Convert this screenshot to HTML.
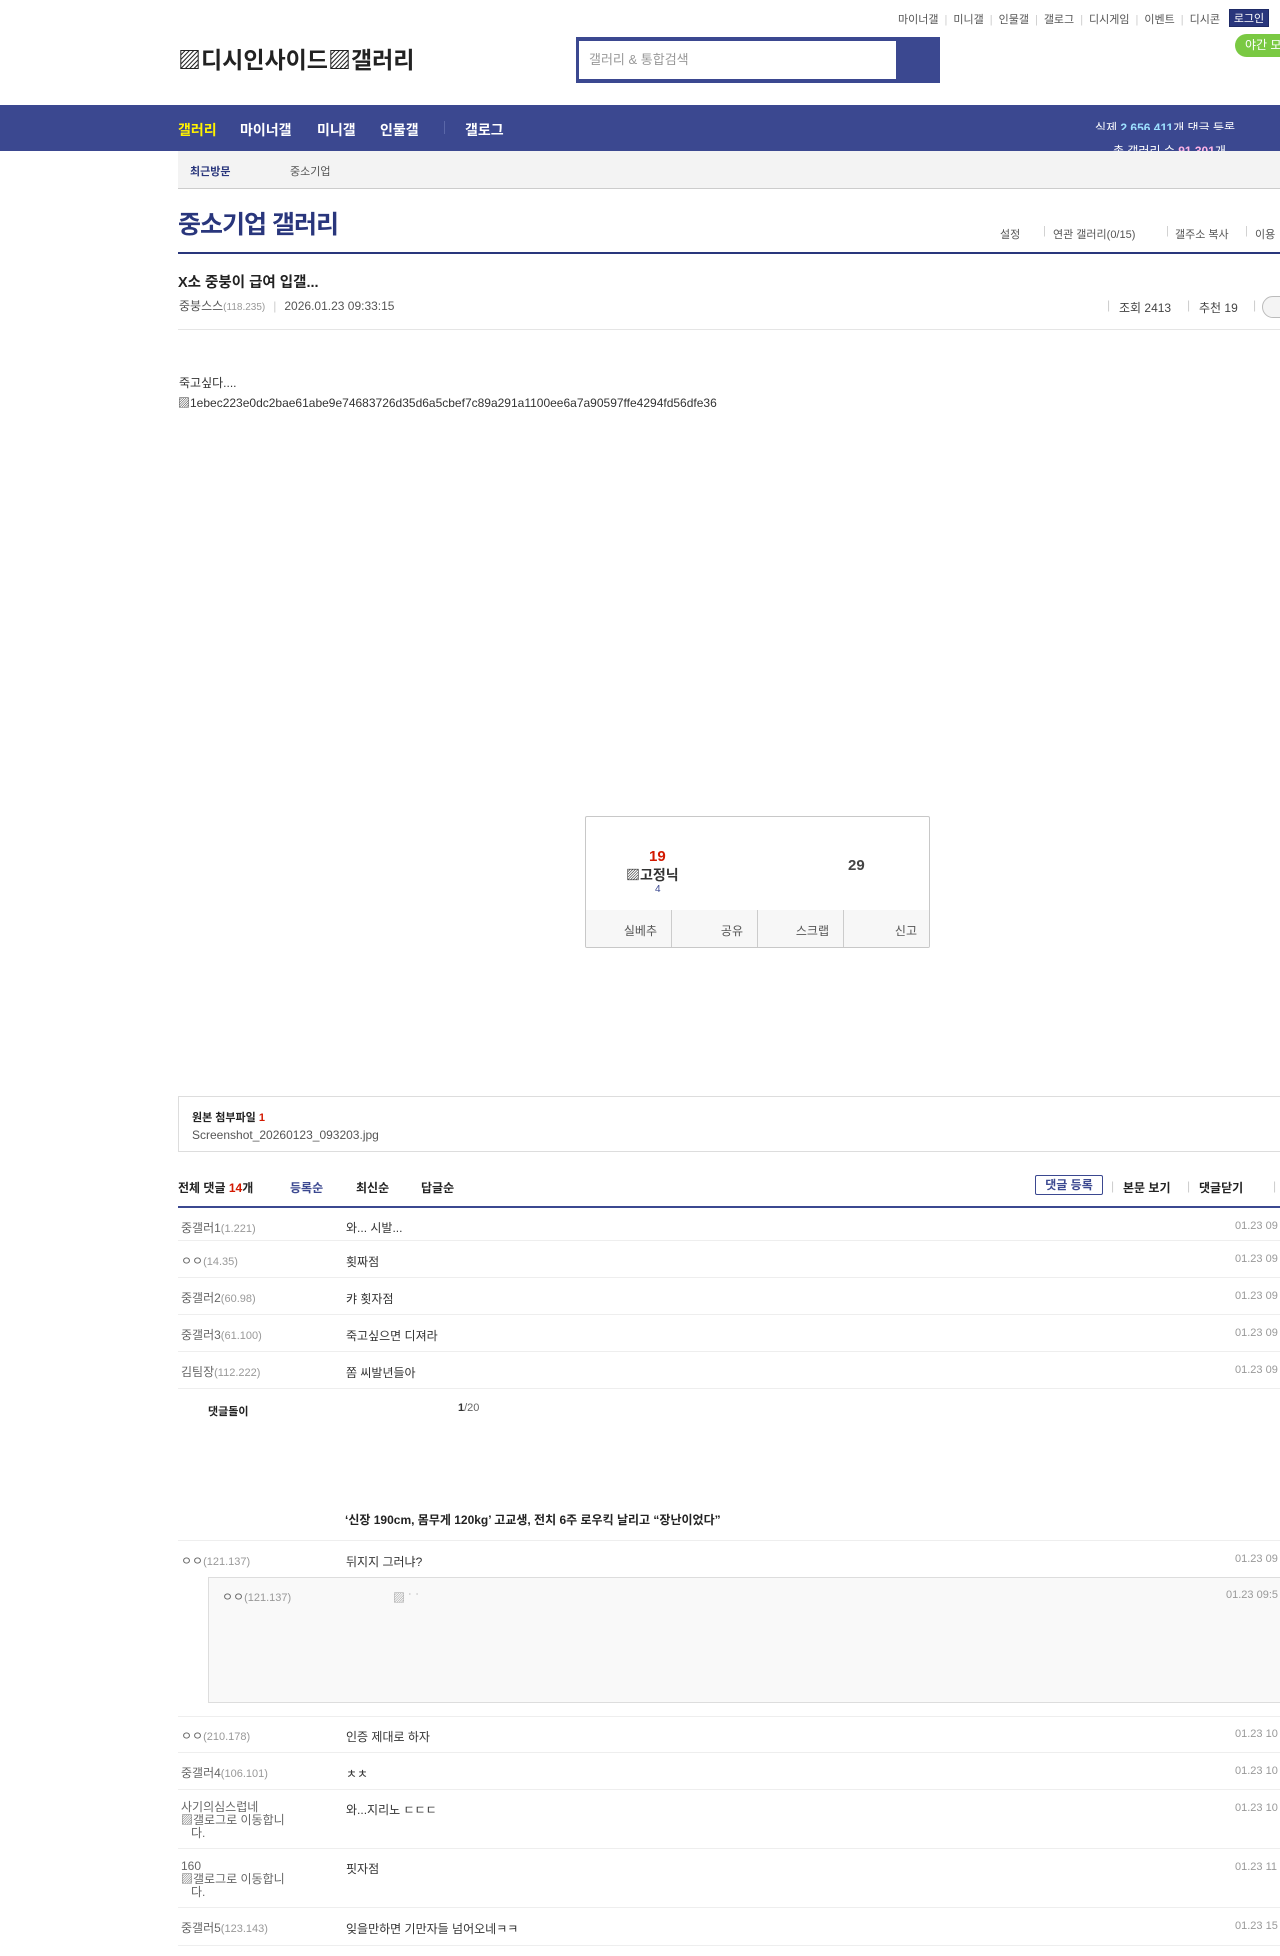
<!DOCTYPE html>
<html><head><meta charset="utf-8">
<style>
*{margin:0;padding:0;box-sizing:border-box}
body{width:1280px;height:1956px;overflow:hidden;background:#fff;font-family:"Liberation Sans","Noto Sans CJK KR",sans-serif;font-size:12px;color:#333;position:relative}
.a{position:absolute;white-space:nowrap}
.top{top:11px;right:60px;font-size:11px;color:#555}
.top span{color:#ccc;margin:0 6px}
.login{top:9px;left:1229px;width:40px;height:18px;background:#29367c;color:#fff;font-size:11px;line-height:18px;text-align:center;border:1px solid #1e2a66}
.night{top:34px;left:1235px;width:60px;height:23px;background:#7ac943;color:#fff;border-radius:12px;font-size:12px;line-height:23px;padding-left:10px}
.logo{top:41px;left:178px;font-size:23px;font-weight:bold;color:#222}
.search{top:37px;left:576px;width:364px;height:46px;background:#3b4890}
.search .in{position:absolute;left:3px;top:4px;width:317px;height:38px;background:#fff;color:#999;font-size:13px;line-height:38px;padding-left:10px}
.nav{top:105px;left:0;width:1280px;height:46px;background:#3b4890}
.nav .i{position:absolute;top:15px;color:#fff;font-weight:bold;font-size:14px}
.sub{top:151px;left:178px;width:1102px;height:38px;background:#f3f3f3;border-bottom:1px solid #ccc}
.ttl{top:205px;left:178px;font-size:25px;font-weight:bold;color:#29367c;letter-spacing:-1px}
.line{left:178px;width:1102px}
.cm{left:178px;width:1102px;height:1px;background:#eee}
.nick{left:181px;color:#666}
.nick small{font-size:11px;color:#999}
.txt{left:346px;color:#333}
.dt{left:1235px;color:#999;font-size:11px}
.sep{color:#ccc}
.rb{position:absolute;top:93px;height:37px;width:86px;background:#f7f7f7;border-right:1px solid #ccc;color:#555;line-height:42px;text-align:right;padding-right:14px}
</style></head><body>
<div class="a top">마이너갤<span>|</span>미니갤<span>|</span>인물갤<span>|</span>갤로그<span>|</span>디시게임<span>|</span>이벤트<span>|</span>디시콘</div>
<div class="a login">로그인</div>
<div class="a night">야간 모</div>
<div class="a logo">▨디시인사이드▨갤러리</div>
<div class="a search"><div class="in">갤러리 &amp; 통합검색</div></div>
<div class="a nav">
<span class="i" style="left:178px;color:#fff200">갤러리</span>
<span class="i" style="left:240px">마이너갤</span>
<span class="i" style="left:317px">미니갤</span>
<span class="i" style="left:380px">인물갤</span>
<span class="i" style="left:444px;top:16px;width:1px;height:13px;background:#5a67a8"></span>
<span class="i" style="left:465px">갤로그</span>
<div style="position:absolute;left:1095px;top:14px;height:11px;overflow:hidden;color:#fff;font-size:12px;width:185px">실제 <b style="color:#9de0ff">2,656,411</b>개 댓글 등록</div>
<div style="position:absolute;left:1113px;top:37px;height:9px;overflow:hidden;color:#fff;font-size:12px">총 갤러리 수 <b style="color:#ffb3e6">91,301</b>개</div>
</div>
<div class="a sub"><span class="a" style="left:12px;top:12px;font-weight:bold;font-size:11px;color:#29367c">최근방문</span><span class="a" style="left:112px;top:12px;font-size:11px;color:#555">중소기업</span></div>
<div class="a ttl">중소기업 갤러리</div>
<div class="a" style="top:226px;left:1000px;color:#555;font-size:11px">설정</div>
<div class="a sep" style="top:225px;left:1043px;font-size:11px">|</div>
<div class="a" style="top:226px;left:1053px;color:#555;font-size:11px">연관 갤러리(0/15)</div>
<div class="a sep" style="top:225px;left:1166px;font-size:11px">|</div>
<div class="a" style="top:226px;left:1175px;color:#555;font-size:11px">갤주소 복사</div>
<div class="a sep" style="top:225px;left:1245px;font-size:11px">|</div>
<div class="a" style="top:226px;left:1255px;color:#555;font-size:11px">이용</div>
<div class="a line" style="top:252px;height:2px;background:#29367c"></div>
<div class="a" style="top:271px;left:178px;font-size:14.5px;font-weight:bold;color:#222">X소 중붕이 급여 입갤...</div>
<div class="a" style="top:297px;left:179px;color:#555">중붕스스<small style="font-size:10px;color:#999">(118.235)</small><span style="color:#ccc;margin:0 8px">|</span>2026.01.23 09:33:15</div>
<div class="a sep" style="top:298px;left:1107px">|</div>
<div class="a" style="top:299px;left:1119px;color:#444">조회 2413</div>
<div class="a sep" style="top:298px;left:1187px">|</div>
<div class="a" style="top:299px;left:1199px;color:#444">추천 19</div>
<div class="a sep" style="top:298px;left:1253px">|</div>
<div class="a" style="top:296px;left:1262px;width:30px;height:22px;border:1px solid #bbb;border-radius:11px;background:#f4f4f4"></div>
<div class="a line" style="top:329px;height:1px;background:#e5e5e5"></div>
<div class="a" style="top:374px;left:179px">죽고싶다....</div>
<div class="a" style="top:394px;left:178px;color:#333">▨1ebec223e0dc2bae61abe9e74683726d35d6a5cbef7c89a291a1100ee6a7a90597ffe4294fd56dfe36</div>

<div class="a" style="top:816px;left:585px;width:345px;height:132px;border:1px solid #c8c8c8;border-radius:2px;overflow:hidden">
<div class="a" style="top:31px;left:63px;color:#d31900;font-weight:bold;font-size:15px">19</div>
<div class="a" style="top:48px;left:40px;color:#333;font-weight:bold;font-size:14px">▨고정닉</div>
<div class="a" style="top:67px;left:69px;color:#3b4890;font-size:10px">4</div>
<div class="a" style="top:40px;left:262px;color:#444;font-weight:bold;font-size:15px">29</div>
<div class="a" style="top:93px;left:0;width:345px;height:1px;background:#ccc"></div>
<div class="rb" style="left:0">실베추</div>
<div class="rb" style="left:86px">공유</div>
<div class="rb" style="left:172px">스크랩</div>
<div class="rb" style="left:258px;border-right:0;width:87px">신고</div>
</div>

<div class="a" style="top:1096px;left:178px;width:1102px;height:56px;border:1px solid #ddd;border-right:0">
<div class="a" style="top:12px;left:13px;font-weight:bold;font-size:11px;color:#222">원본 첨부파일 <span style="color:#d31900">1</span></div>
<div class="a" style="top:31px;left:13px;color:#555">Screenshot_20260123_093203.jpg</div>
</div>
<div class="a" style="top:1179px;left:178px;font-weight:bold;color:#222">전체 댓글 <span style="color:#d31900">14</span>개</div>
<div class="a" style="top:1179px;left:290px;font-weight:bold;color:#3b4890">등록순</div>
<div class="a" style="top:1179px;left:356px;font-weight:bold;color:#222">최신순</div>
<div class="a" style="top:1179px;left:421px;font-weight:bold;color:#222">답글순</div>
<div class="a" style="top:1175px;left:1035px;width:68px;height:20px;border:1px solid #3b4890;border-radius:2px;color:#3b4890;font-weight:bold;text-align:center;line-height:18px">댓글 등록</div>
<div class="a sep" style="top:1179px;left:1111px">|</div>
<div class="a" style="top:1179px;left:1123px;font-weight:bold;color:#222">본문 보기</div>
<div class="a sep" style="top:1179px;left:1187px">|</div>
<div class="a" style="top:1179px;left:1199px;font-weight:bold;color:#222">댓글닫기</div>
<div class="a sep" style="top:1179px;left:1273px">|</div>
<div class="a line" style="top:1206px;height:2px;background:#3b4890"></div>

<div class="a nick" style="top:1219px">중갤러1<small>(1.221)</small></div><div class="a txt" style="top:1219px">와... 시발...</div><div class="a dt" style="top:1220px">01.23 09</div><div class="a cm" style="top:1240px"></div>
<div class="a nick" style="top:1252px">ㅇㅇ<small>(14.35)</small></div><div class="a txt" style="top:1253px">횟짜점</div><div class="a dt" style="top:1253px">01.23 09</div><div class="a cm" style="top:1277px"></div>
<div class="a nick" style="top:1289px">중갤러2<small>(60.98)</small></div><div class="a txt" style="top:1290px">캬 횟자점</div><div class="a dt" style="top:1290px">01.23 09</div><div class="a cm" style="top:1314px"></div>
<div class="a nick" style="top:1326px">중갤러3<small>(61.100)</small></div><div class="a txt" style="top:1327px">죽고싶으면 디져라</div><div class="a dt" style="top:1327px">01.23 09</div><div class="a cm" style="top:1351px"></div>
<div class="a nick" style="top:1363px">김팀장<small>(112.222)</small></div><div class="a txt" style="top:1364px">쫌 씨발년들아</div><div class="a dt" style="top:1364px">01.23 09</div><div class="a cm" style="top:1388px"></div>
<div class="a" style="top:1403px;left:208px;font-weight:bold;font-size:11px;color:#222">댓글돌이</div>
<div class="a" style="top:1402px;left:458px;font-size:11px;color:#666"><b style="color:#333">1</b>/20</div>
<div class="a" style="top:1511px;left:345px;font-weight:bold;color:#222">‘신장 190cm, 몸무게 120kg’ 고교생, 전치 6주 로우킥 날리고 “장난이었다”</div>
<div class="a cm" style="top:1540px"></div>
<div class="a nick" style="top:1552px">ㅇㅇ<small>(121.137)</small></div><div class="a txt" style="top:1553px">뒤지지 그러냐?</div><div class="a dt" style="top:1553px">01.23 09</div>
<div class="a" style="top:1577px;left:208px;width:1072px;height:126px;background:#f9f9f9;border:1px solid #ddd;border-right:0">
<div class="a nick" style="top:10px;left:13px">ㅇㅇ<small>(121.137)</small></div>
<div class="a" style="top:11px;left:184px;color:#999">▨ ˙ ˙</div>
<div class="a dt" style="top:11px;left:1017px">01.23 09:5</div>
</div>
<div class="a cm" style="top:1716px"></div>
<div class="a nick" style="top:1727px">ㅇㅇ<small>(210.178)</small></div><div class="a txt" style="top:1728px">인증 제대로 하자</div><div class="a dt" style="top:1728px">01.23 10</div><div class="a cm" style="top:1752px"></div>
<div class="a nick" style="top:1764px">중갤러4<small>(106.101)</small></div><div class="a txt" style="top:1765px">ㅊㅊ</div><div class="a dt" style="top:1765px">01.23 10</div><div class="a cm" style="top:1789px"></div>
<div class="a nick" style="top:1801px;line-height:13px;white-space:normal;width:130px">사기의심스럽네<br>▨갤로그로 이동합니<br>&nbsp;&nbsp;&nbsp;다.</div><div class="a txt" style="top:1801px">와...지리노 ㄷㄷㄷ</div><div class="a dt" style="top:1802px">01.23 10</div><div class="a cm" style="top:1848px"></div>
<div class="a nick" style="top:1860px;line-height:13px;white-space:normal;width:130px">160<br>▨갤로그로 이동합니<br>&nbsp;&nbsp;&nbsp;다.</div><div class="a txt" style="top:1860px">핏자점</div><div class="a dt" style="top:1861px">01.23 11</div><div class="a cm" style="top:1907px"></div>
<div class="a nick" style="top:1919px">중갤러5<small>(123.143)</small></div><div class="a txt" style="top:1920px">잊을만하면 기만자들 넘어오네ㅋㅋ</div><div class="a dt" style="top:1920px">01.23 15</div><div class="a cm" style="top:1945px"></div>
</body></html>
